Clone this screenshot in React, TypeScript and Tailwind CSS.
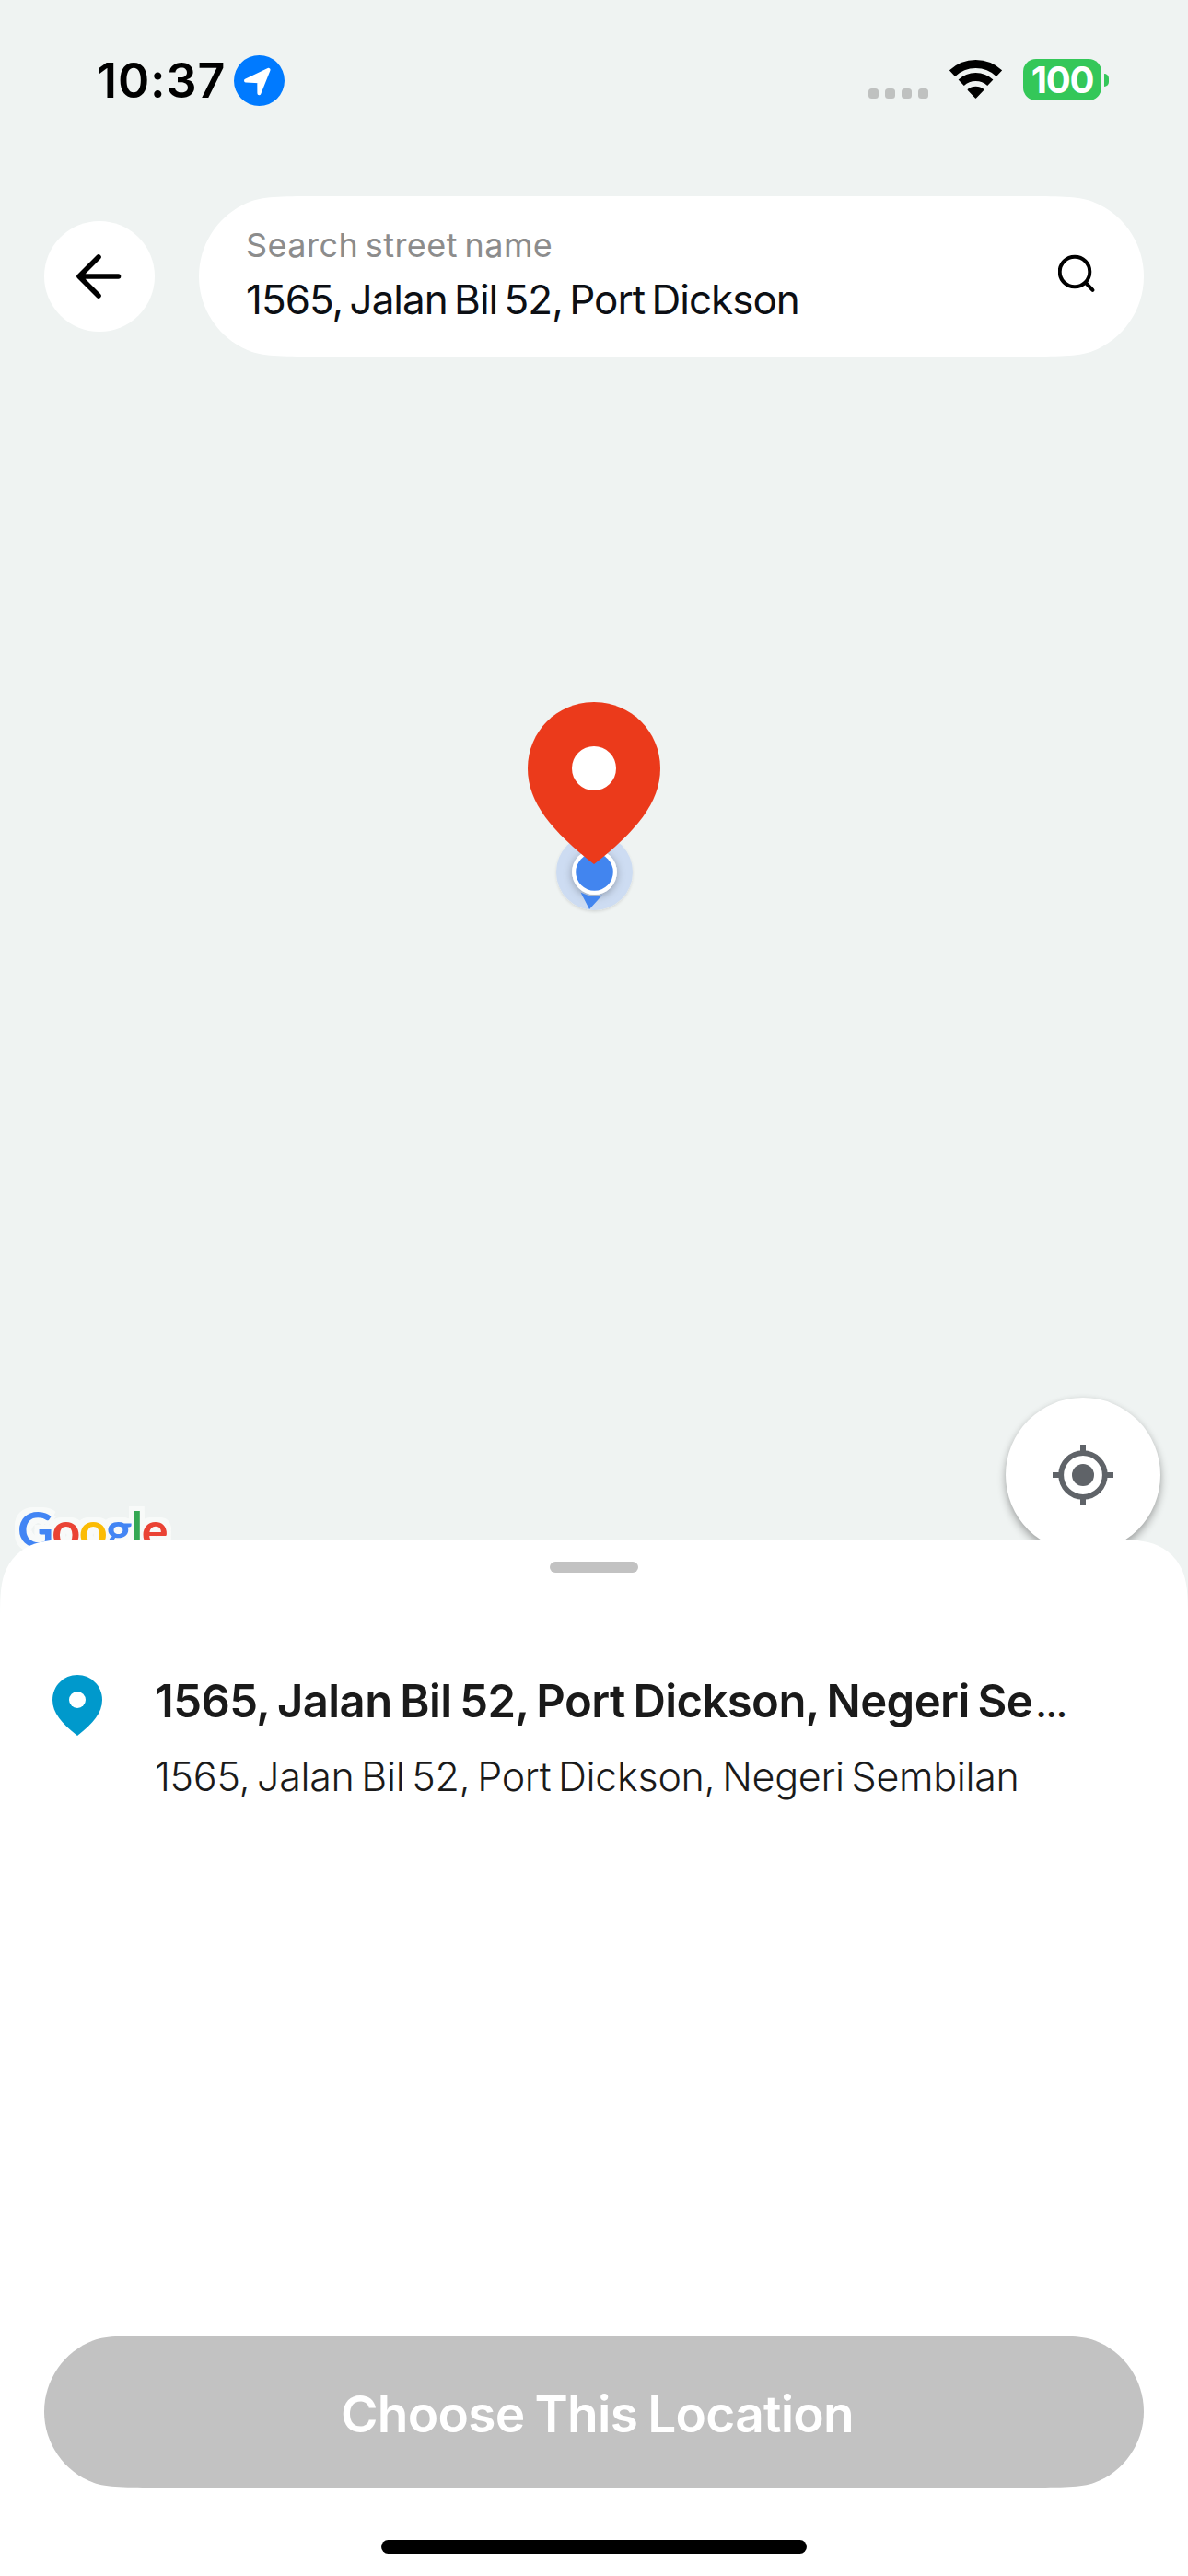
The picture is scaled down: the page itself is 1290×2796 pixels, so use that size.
function StatusBar() {
  return (
    <div className="flex h-[213px] items-start justify-between pt-[60px] pr-[86px] pl-[105px]">
      <div className="flex items-start">
        <span className="mt-[2px] w-[149px] text-[52px] leading-none font-semibold tracking-[0.9px] text-black">10:37</span>
        <svg className="size-[55px]" viewBox="0 0 55 55">
          <circle cx="27.5" cy="27.5" r="27.5" fill="#007aff" />
          <path d="M37.6 15.8 13 27.6 27.3 28.2 27.4 41.2z" fill="#fff" stroke="#fff" strokeWidth="4" strokeLinejoin="round" />
        </svg>
      </div>
      <div className="flex items-start">
        <div className="mt-[36px] flex gap-[7px]">
          {[0, 1, 2, 3].map((i) => (
            <span key={i} className="size-[11px] rounded-[3.5px] bg-[#bfc1c0]" />
          ))}
        </div>
        <svg className="mt-[5px] ml-[23px] h-[42px] w-[57px]" viewBox="0 0 57 42" fill="none" stroke="#000" strokeWidth="9">
          <path d="M3 14.7A37 37 0 0 1 54 14.7" />
          <path d="M12.7 24.8A23 23 0 0 1 44.3 24.8" />
          <path d="M20.3 32.4A12.5 12.5 0 0 1 36.7 32.4L28.5 41z" fill="#000" strokeWidth="1.4" strokeLinejoin="round" />
        </svg>
        <div className="mt-[4px] ml-[23px] flex items-center gap-[3px]">
          <div className="flex h-[45px] w-[85px] items-center justify-center rounded-[14px] bg-[#34c759] text-[40px] leading-none font-bold tracking-[-1.2px] text-white">
            100
          </div>
          <span className="h-[14px] w-[5px] rounded-r-full bg-[#34c759]" />
        </div>
      </div>
    </div>
  );
}

function SearchHeader() {
  return (
    <div className="flex items-center gap-12 px-12">
      <button className="flex size-[120px] items-center justify-center rounded-full bg-white">
        <svg className="-ml-[2px] size-[54px]" viewBox="0 0 54 54" fill="none" stroke="#000" strokeWidth="5.6" strokeLinecap="round" strokeLinejoin="round">
          <path d="M48.5 27H6.2M27 6 6 27 27 48" />
        </svg>
      </button>
      <div className="flex h-[174px] w-[1026px] items-start justify-between bg-white pt-[35px] pr-[51px] pl-[51px] [clip-path:path('M133_0H893C931.3_0_954.7_0_969.5_5.5C1003.5_18.2_1026_50.7_1026_87C1026_123.3_1003.5_155.8_969.5_168.5C954.7_174_931.3_174_893_174H133C94.7_174_71.3_174_56.5_168.5C22.5_155.8_0_123.3_0_87C0_50.7_22.5_18.2_56.5_5.5C71.3_0_94.7_0_133_0Z')]">
        <div className="flex flex-col gap-[19px] whitespace-nowrap">
          <span className="text-[36px] leading-none tracking-[0.45px] text-[#8c8c8c] [word-spacing:-3px]">Search street name</span>
          <span className="text-[44px] leading-none tracking-[-1px] text-[#0c0f14] [word-spacing:-4px]">1565, Jalan Bil 52, Port Dickson</span>
        </div>
        <svg className="mt-[28px] size-[42px]" viewBox="0 0 42 42" fill="none" stroke="#000" strokeWidth="4" strokeLinecap="round">
          <circle cx="18" cy="19" r="16.3" />
          <path d="M30 31 37.5 38.8" />
        </svg>
      </div>
    </div>
  );
}

const PIN = "M27 0C12 0 0 12 0 27C0 41 10 52.7 27 66C44 52.7 54 41 54 27C54 12 42 0 27 0Z";

function MapMarkers() {
  return (
    <>
      <svg className="absolute top-[895px] left-[593px] h-[104px] w-[104px]" viewBox="0 0 104 104">
        <defs>
          <filter id="halo" x="-20%" y="-20%" width="140%" height="140%">
            <feDropShadow dx="0" dy="1.5" stdDeviation="1.5" floodColor="#000" floodOpacity="0.12" />
          </filter>
          <filter id="dot" x="-40%" y="-40%" width="180%" height="180%">
            <feDropShadow dx="0" dy="2" stdDeviation="5" floodColor="#000" floodOpacity="0.3" />
          </filter>
        </defs>
        <circle cx="52.5" cy="51.5" r="41.5" fill="#cddcf2" filter="url(#halo)" />
        <circle cx="52.5" cy="51.5" r="24.3" fill="#fff" filter="url(#dot)" />
        <path d="M37.5 73.5Q50 80 61 76.5L47 92z" fill="#4285ef" />
        <circle cx="52.5" cy="51.5" r="24.3" fill="#fff" />
        <circle cx="52.5" cy="51.5" r="20.3" fill="#4285ef" />
      </svg>
      <svg className="absolute top-[762px] left-[573px] h-[176px] w-[144px]" viewBox="0 0 54 66">
        <path d={PIN} fill="#eb3a1b" />
        <circle cx="27" cy="27" r="9" fill="#fff" />
      </svg>
      <div className="absolute top-[1633px] left-[19px] font-['Lato',sans-serif] text-[54px] leading-none font-bold tracking-[-1.6px] [filter:drop-shadow(5px_0_0_#f8faf9)_drop-shadow(-5px_0_0_#f8faf9)_drop-shadow(0_5px_0_#f8faf9)_drop-shadow(0_-5px_0_#f8faf9)]">
        <span className="text-[#4285f4]">G</span>
        <span className="text-[#ea4335]">o</span>
        <span className="text-[#fbbc04]">o</span>
        <span className="text-[#4285f4]">g</span>
        <span className="text-[#34a853]">l</span>
        <span className="text-[#ea4335]">e</span>
      </div>
      <button className="absolute top-[1517px] left-[1092px] flex size-[168px] items-center justify-center rounded-full bg-white shadow-[0_5px_10px_rgba(0,0,0,0.32),0_0_6px_rgba(0,0,0,0.04)]">
        <svg className="size-[66px]" viewBox="0 0 66 66">
          <circle cx="33" cy="33" r="23.8" fill="none" stroke="#5f6368" strokeWidth="5.8" />
          <circle cx="33" cy="33" r="12" fill="#5f6368" />
          <path d="M33 0V8M33 58V66M0 33H8M58 33H66" stroke="#5f6368" strokeWidth="6" />
        </svg>
      </button>
    </>
  );
}

function LocationSheet() {
  return (
    <div className="relative flex h-[1125px] flex-col items-center bg-white [clip-path:path('M92_0H1198C1223_0_1238_0_1252_4.5C1268_10_1280_22_1285.5_38C1290_52_1290_67_1290_92V1125H0V92C0_67_0_52_4.5_38C10_22_22_10_38_4.5C52_0_67_0_92_0Z')]">
      <span className="mt-6 h-3 w-24 rounded-full bg-[#c2c2c2]" />
      <div className="mt-[111px] flex w-full items-start pl-[57px]">
        <svg className="h-[66px] w-[54px]" viewBox="0 0 54 66">
          <path d={PIN} fill="#0099cc" />
          <circle cx="27" cy="27" r="9" fill="#fff" />
        </svg>
        <div className="mt-1 ml-[57px] flex flex-col gap-[36px] whitespace-nowrap text-[#1a1a1a]">
          <span className="text-[49px] leading-none font-semibold tracking-[-0.58px] [word-spacing:-3px]">
            1565, Jalan Bil 52, Port Dickson, Negeri Se<span className="ml-[4px] text-[30px] leading-none font-black tracking-[-1px]">…</span>
          </span>
          <span className="text-[43px] leading-none font-[350] tracking-[-0.3px] [word-spacing:-4px]">1565, Jalan Bil 52, Port Dickson, Negeri Sembilan</span>
        </div>
      </div>
      <button className="mt-auto flex h-[165px] w-[1194px] shrink-0 items-center justify-center bg-[#c2c2c2] pt-[5px] pl-[7px] text-[55px] leading-none font-semibold tracking-[-0.75px] text-white [word-spacing:-2px] [clip-path:path('M126_0H1068C1104.2_0_1126.4_0_1140.4_5.2C1172.6_17.2_1194_48.1_1194_82.5C1194_116.9_1172.6_147.8_1140.4_159.8C1126.4_165_1104.2_165_1068_165H126C89.8_165_67.6_165_53.6_159.8C21.4_147.8_0_116.9_0_82.5C0_48.1_21.4_17.2_53.6_5.2C67.6_0_89.8_0_126_0Z')]">
        Choose This Location
      </button>
      <span className="mt-[57px] mb-6 h-[15px] w-[462px] shrink-0 rounded-full bg-black" />
    </div>
  );
}

export default function App() {
  return (
    <div className="relative flex h-[2796px] w-[1290px] flex-col overflow-hidden bg-[#eff3f2] font-['Inter',sans-serif]">
      <div className="h-[1671px] shrink-0">
        <MapMarkers />
        <StatusBar />
        <SearchHeader />
      </div>
      <LocationSheet />
    </div>
  );
}
